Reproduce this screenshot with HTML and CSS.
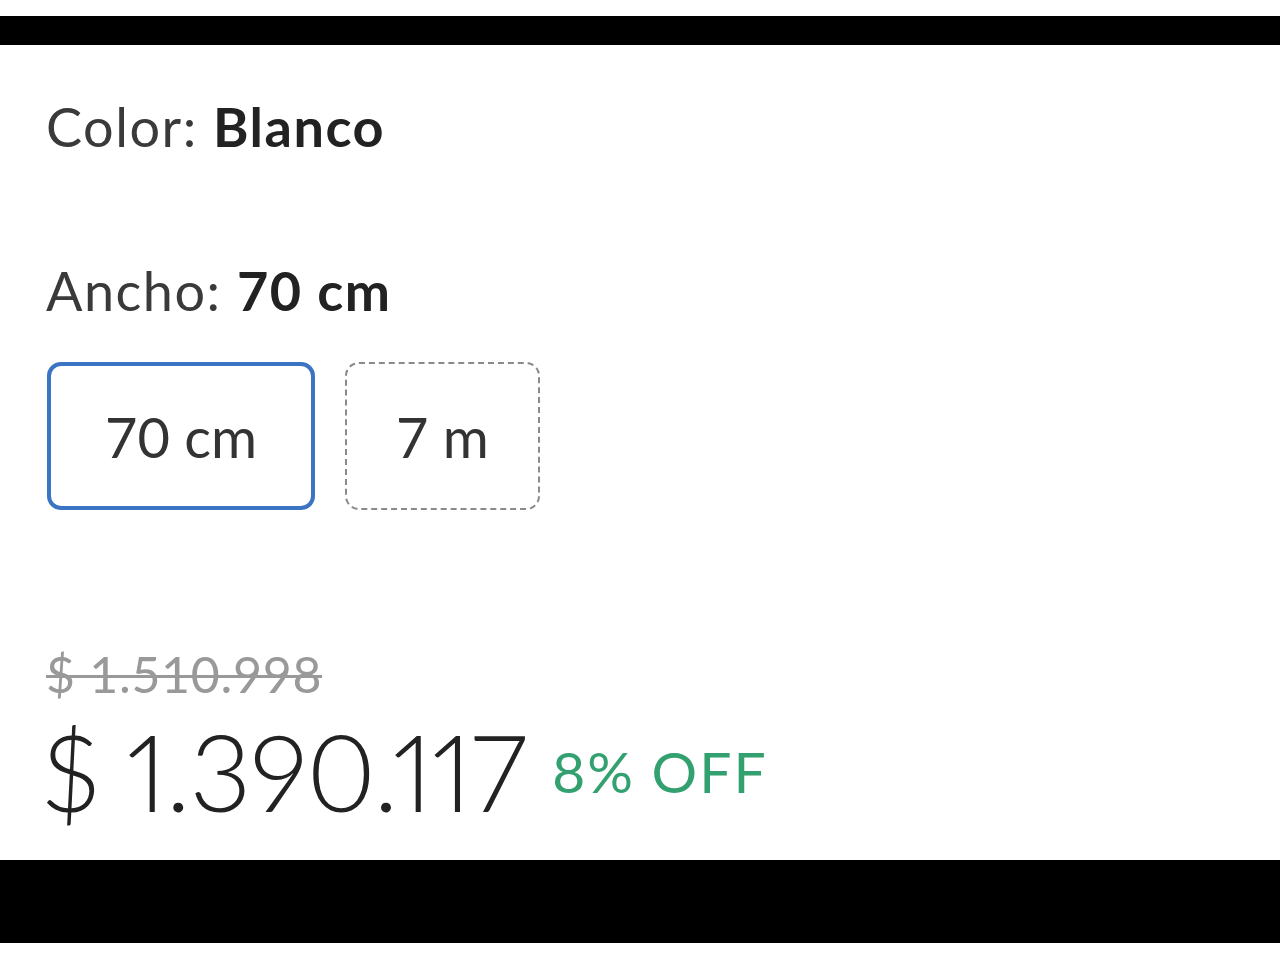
FILE: index.html
```html
<!DOCTYPE html>
<html lang="es">
<head>
<meta charset="UTF-8">
<meta name="viewport" content="width=device-width, initial-scale=1.0">
<title>Producto</title>
<link rel="stylesheet" href="styles.css">
</head>
<body>

<div class="bar bar-top"></div>

<div class="product">
  <p class="spec spec-color">Color: <strong>Blanco</strong></p>
  <p class="spec spec-width">Ancho: <strong>70 cm</strong></p>

  <div class="options">
    <button class="option selected" type="button">70 cm</button>
    <button class="option unavailable" type="button">7 m</button>
  </div>

  <div class="price-block">
    <s class="old-price">$ 1.510.998</s>
    <div class="price-row">
      <span class="price">$ 1.390.117</span>
      <span class="discount">8% OFF</span>
    </div>
  </div>
</div>

<div class="bar bar-bottom"></div>

</body>
</html>
```

FILE: styles.css
```css
body {
  margin: 0;
  background: #fff;
  font-family: "Lato", "Liberation Sans", sans-serif;
  color: #333;
}
.bar {
  background: #000;
}
.bar-top {
  margin-top: 16px;
  height: 29px;
}
.bar-bottom {
  height: 83px;
}
.product {
  height: 815px;
  padding-left: 46px;
  box-sizing: border-box;
}
.spec {
  margin: 0;
  font-size: 54px;
  line-height: 64px;
  letter-spacing: 1.5px;
  color: #3a3a3a;
}
.spec strong {
  font-weight: 700;
  color: #222;
}
.spec-color {
  padding-top: 50px;
}
.spec-width {
  margin-top: 100px;
}
.options {
  display: flex;
  align-items: center;
  gap: 30px;
  margin-top: 39px;
  padding-left: 1px;
}
.option {
  height: 148px;
  border-radius: 14px;
  background: #fff;
  font-family: inherit;
  font-size: 56px;
  color: #333;
  padding: 0;
  cursor: pointer;
}
.option.selected {
  width: 268px;
  border: 4px solid #3a74c2;
}
.option.unavailable {
  width: 195px;
  border: 2px dashed #8a8a8a;
}
.price-block {
  margin-top: 134px;
}
.old-price {
  display: block;
  font-size: 50px;
  line-height: 60px;
  letter-spacing: 0.7px;
  color: #999;
  text-decoration-thickness: 3px;
}
.price-row {
  display: flex;
  align-items: center;
  gap: 26px;
  margin-top: 3px;
  margin-left: -4px;
  font-variant-numeric: proportional-nums;
}
.price {
  font-size: 107px;
  line-height: 128px;
  font-weight: 300;
  letter-spacing: -1px;
  color: #222;
}
.discount {
  font-size: 57px;
  line-height: 57px;
  letter-spacing: 2px;
  color: #33a06f;
}
```
